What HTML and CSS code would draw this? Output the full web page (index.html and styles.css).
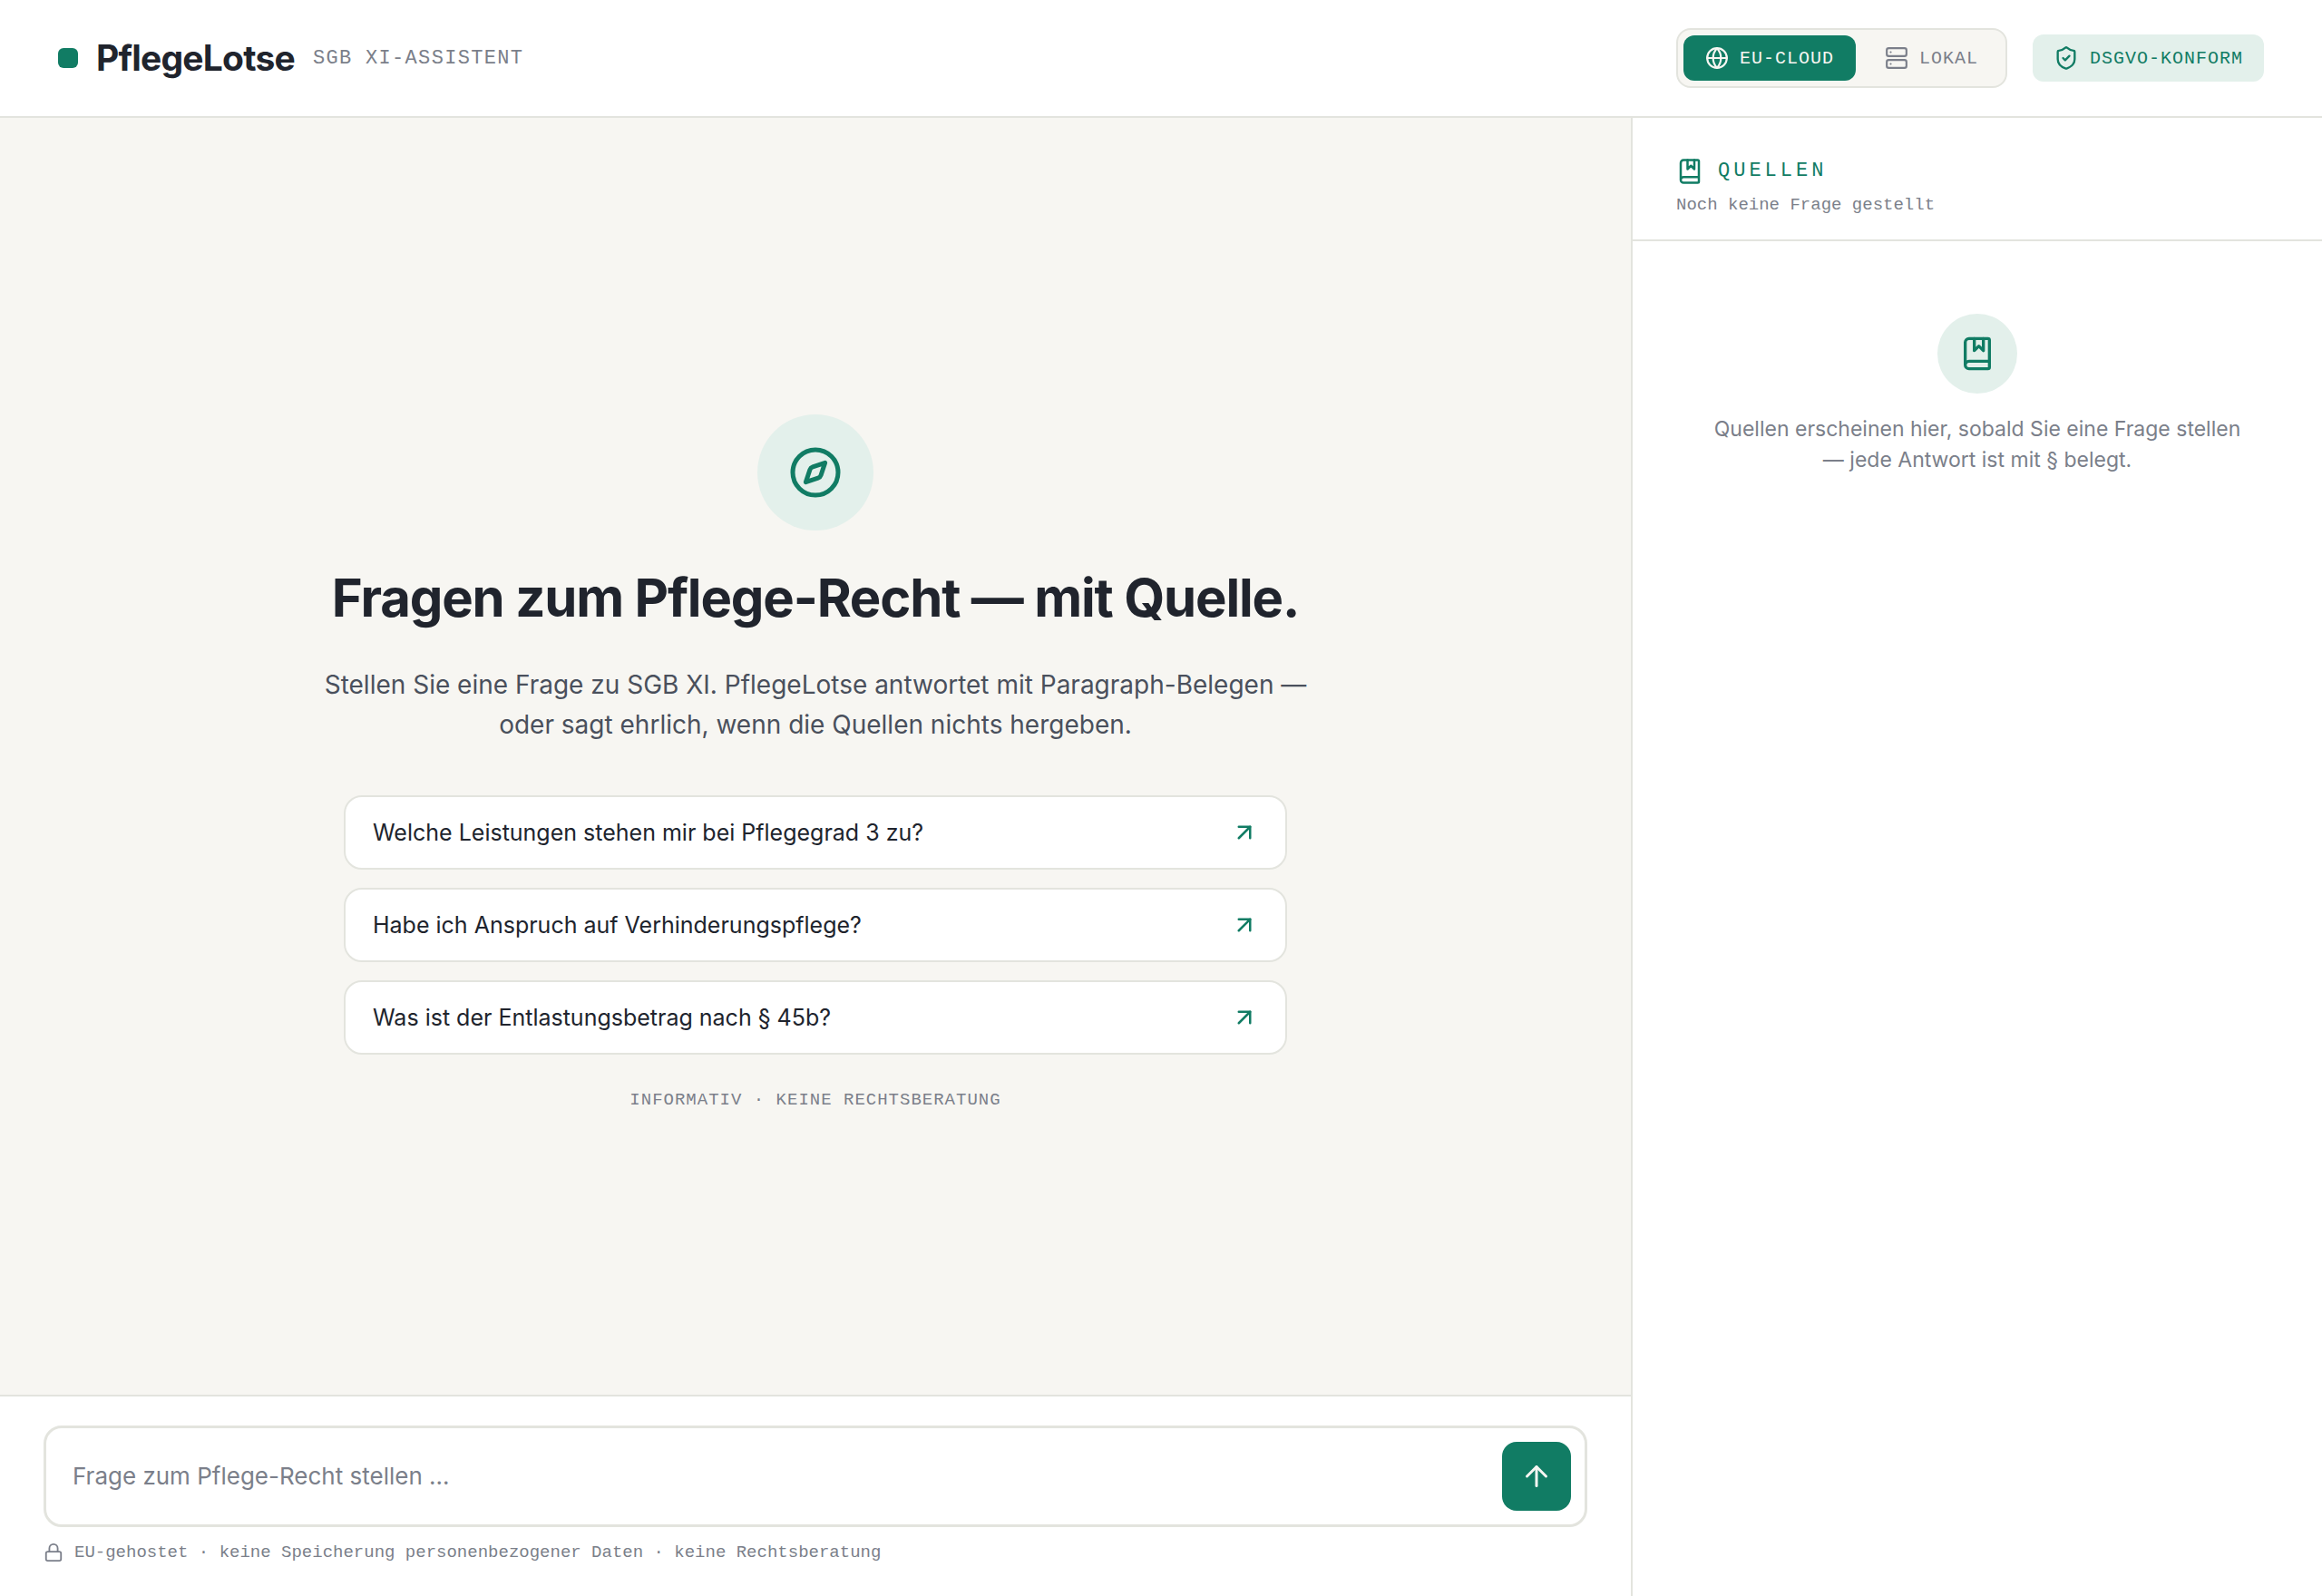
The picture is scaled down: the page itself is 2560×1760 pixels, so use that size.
FILE: index.html
```html
<!DOCTYPE html>
<html lang="de">
<head>
  <meta charset="utf-8">
  <meta name="viewport" content="width=device-width, initial-scale=1">
  <title>PflegeLotse</title>
  <link rel="stylesheet" href="styles.css">
</head>
<body>
  <svg class="sprite" aria-hidden="true">
    <symbol id="icon-book" viewBox="0 0 24 24">
      <path d="M10 2v8l3-3 3 3V2"/>
      <path d="M4 19.500v-15A2.500 2.500 0 0 1 6.500 2H19a1 1 0 0 1 1 1v18a1 1 0 0 1-1 1H6.500a1 1 0 0 1 0-5H20"/>
    </symbol>
    <symbol id="icon-arrow-up-right" viewBox="0 0 24 24">
      <path d="M7 7h10v10"/>
      <path d="M7 17 17 7"/>
    </symbol>
  </svg>

  <header class="topbar">
    <div class="brand">
      <span class="brand-mark"></span>
      <span class="brand-name">PflegeLotse</span>
      <span class="brand-tag">SGB XI-ASSISTENT</span>
    </div>
    <div class="topbar-status">
      <div class="mode-switch" role="group" aria-label="Betriebsmodus">
        <button class="mode mode-active" type="button" aria-pressed="true">
          <svg class="icon icon-s" viewBox="0 0 24 24" aria-hidden="true">
            <circle cx="12" cy="12" r="10"/>
            <path d="M12 2a14.500 14.500 0 0 0 0 20 14.500 14.500 0 0 0 0-20"/>
            <path d="M2 12h20"/>
          </svg>
          EU-CLOUD
        </button>
        <button class="mode" type="button" aria-pressed="false">
          <svg class="icon icon-s" viewBox="0 0 24 24" aria-hidden="true">
            <rect x="2" y="2" width="20" height="8" rx="2"/>
            <rect x="2" y="14" width="20" height="8" rx="2"/>
            <path d="M6 6h.01M6 18h.01"/>
          </svg>
          LOKAL
        </button>
      </div>
      <div class="badge">
        <svg class="icon icon-m" viewBox="0 0 24 24" aria-hidden="true">
          <path d="M20 13c0 5-3.500 7.500-7.660 8.950a1 1 0 0 1-.67-.01C7.500 20.500 4 18 4 13V6a1 1 0 0 1 1-1c2 0 4.500-1.200 6.240-2.720a1.170 1.170 0 0 1 1.520 0C14.510 3.810 17 5 19 5a1 1 0 0 1 1 1z"/>
          <path d="m9 12 2 2 4-4"/>
        </svg>
        DSGVO-KONFORM
      </div>
    </div>
  </header>

  <div class="workspace">
    <main class="chat">
      <section class="welcome">
        <div class="welcome-icon">
          <svg class="icon icon-xxl" viewBox="0 0 24 24" aria-hidden="true">
            <circle cx="12" cy="12" r="10"/>
            <path d="m16.240 7.760-1.804 5.411a2 2 0 0 1-1.265 1.265L7.760 16.240l1.804-5.411a2 2 0 0 1 1.265-1.265z"/>
          </svg>
        </div>
        <h1 class="welcome-title">Fragen zum Pflege-Recht — mit Quelle.</h1>
        <p class="welcome-text">Stellen Sie eine Frage zu SGB XI. PflegeLotse antwortet mit Paragraph-Belegen — oder sagt ehrlich, wenn die Quellen nichts hergeben.</p>
        <div class="suggestions">
          <button class="suggestion" type="button">
            <span>Welche Leistungen stehen mir bei Pflegegrad 3 zu?</span>
            <svg class="icon icon-l" aria-hidden="true"><use href="#icon-arrow-up-right"/></svg>
          </button>
          <button class="suggestion" type="button">
            <span>Habe ich Anspruch auf Verhinderungspflege?</span>
            <svg class="icon icon-l" aria-hidden="true"><use href="#icon-arrow-up-right"/></svg>
          </button>
          <button class="suggestion" type="button">
            <span>Was ist der Entlastungsbetrag nach § 45b?</span>
            <svg class="icon icon-l" aria-hidden="true"><use href="#icon-arrow-up-right"/></svg>
          </button>
        </div>
        <p class="disclaimer">INFORMATIV · KEINE RECHTSBERATUNG</p>
      </section>

      <form class="composer">
        <div class="composer-box">
          <input class="composer-input" type="text" placeholder="Frage zum Pflege-Recht stellen …" aria-label="Frage zum Pflege-Recht">
          <button class="send" type="button" aria-label="Frage senden">
            <svg class="icon icon-send" viewBox="0 0 24 24" aria-hidden="true">
              <path d="m5 12 7-7 7 7"/>
              <path d="M12 19V5"/>
            </svg>
          </button>
        </div>
        <p class="privacy">
          <svg class="icon icon-xs" viewBox="0 0 24 24" aria-hidden="true">
            <rect x="3" y="11" width="18" height="11" rx="2"/>
            <path d="M7 11V7a5 5 0 0 1 10 0v4"/>
          </svg>
          EU-gehostet · keine Speicherung personenbezogener Daten · keine Rechtsberatung
        </p>
      </form>
    </main>

    <aside class="sources">
      <header class="sources-head">
        <h2 class="sources-title">
          <svg class="icon icon-l" aria-hidden="true"><use href="#icon-book"/></svg>
          QUELLEN
        </h2>
        <p class="sources-status">Noch keine Frage gestellt</p>
      </header>
      <div class="sources-empty">
        <div class="sources-icon">
          <svg class="icon icon-xl" aria-hidden="true"><use href="#icon-book"/></svg>
        </div>
        <p class="sources-hint">Quellen erscheinen hier, sobald Sie eine Frage stellen — jede Antwort ist mit § belegt.</p>
      </div>
    </aside>
  </div>
</body>
</html>
```

FILE: styles.css
```css
:root {
  --green: #117c64;
  --green-soft: #e3f0eb;
  --paper: #f7f6f2;
  --surface: #ffffff;
  --line: #e3e4de;
  --ink: #20242d;
  --ink-soft: #4a505c;
  --muted: #7b7f8a;
  --sans: Inter, "Liberation Sans", sans-serif;
  --mono: "Liberation Mono", monospace;
}

* {
  box-sizing: border-box;
}

body {
  display: flex;
  flex-direction: column;
  min-height: 100vh;
  margin: 0;
  background: var(--surface);
  color: var(--ink);
  font-family: var(--sans);
}

h1,
h2,
p {
  margin: 0;
}

button {
  border: 0;
  background: none;
  cursor: pointer;
}

.sprite {
  display: none;
}

/* Icons */

.icon {
  flex: none;
  fill: none;
  stroke: currentColor;
  stroke-width: 2;
  stroke-linecap: round;
  stroke-linejoin: round;
}

.icon-xs {
  width: 22px;
  height: 22px;
}

.icon-s {
  width: 26px;
  height: 26px;
}

.icon-m {
  width: 28px;
  height: 28px;
}

.icon-l {
  width: 30px;
  height: 30px;
}

.icon-send {
  width: 36px;
  height: 36px;
}

.icon-xl {
  width: 40px;
  height: 40px;
}

.icon-xxl {
  width: 60px;
  height: 60px;
}

/* Top bar */

.topbar {
  display: flex;
  align-items: center;
  justify-content: space-between;
  padding: 31px 64px;
  border-bottom: 2px solid var(--line);
}

.brand {
  display: flex;
  align-items: center;
}

.brand-mark {
  width: 22px;
  height: 22px;
  border-radius: 6px;
  background: var(--green);
}

.brand-name {
  margin-left: 20px;
  font-size: 39px;
  font-weight: 700;
  line-height: 46px;
  letter-spacing: -0.02em;
}

.brand-tag {
  margin-left: 20px;
  color: var(--muted);
  font-family: var(--mono);
  font-size: 22px;
  letter-spacing: 0.06em;
}

.topbar-status {
  display: flex;
  align-items: center;
  gap: 28px;
  font-family: var(--mono);
  font-size: 20px;
  letter-spacing: 1px;
}

.mode-switch {
  display: flex;
  gap: 8px;
  padding: 6px;
  border: 2px solid var(--line);
  border-radius: 16px;
  background: var(--paper);
}

.mode {
  display: flex;
  align-items: center;
  gap: 12px;
  height: 50px;
  padding: 0 24px;
  border-radius: 12px;
  color: var(--muted);
  font: inherit;
  letter-spacing: inherit;
}

.mode-active {
  background: var(--green);
  color: var(--paper);
}

.badge {
  display: flex;
  align-items: center;
  gap: 12px;
  height: 52px;
  padding: 0 23px;
  border-radius: 12px;
  background: var(--green-soft);
  color: var(--green);
}

/* Workspace */

.workspace {
  display: grid;
  flex: 1;
  grid-template-columns: minmax(0, 1fr) 762px;
}

.chat {
  display: flex;
  flex-direction: column;
}

.welcome {
  display: flex;
  flex: 1;
  flex-direction: column;
  align-items: center;
  justify-content: center;
  padding: 64px 48px 48px;
  background: var(--paper);
  text-align: center;
}

.welcome-icon {
  display: grid;
  place-items: center;
  width: 128px;
  height: 128px;
  border-radius: 50%;
  background: var(--green-soft);
  color: var(--green);
}

.welcome-title {
  margin-top: 40px;
  font-size: 58px;
  font-weight: 700;
  line-height: 68px;
  letter-spacing: -0.02em;
}

.welcome-text {
  max-width: 1120px;
  margin-top: 40px;
  color: var(--ink-soft);
  font-size: 28px;
  line-height: 44px;
}

.suggestions {
  display: flex;
  flex-direction: column;
  gap: 20px;
  width: 100%;
  max-width: 1040px;
  margin-top: 56px;
}

.suggestion {
  display: flex;
  align-items: center;
  justify-content: space-between;
  gap: 24px;
  padding: 22px 30px;
  border: 2px solid var(--line);
  border-radius: 20px;
  background: var(--surface);
  color: var(--ink);
  font-family: var(--sans);
  font-size: 25px;
  line-height: 34px;
  text-align: left;
}

.suggestion .icon {
  color: var(--green);
}

.disclaimer {
  margin-top: 36px;
  color: var(--muted);
  font-family: var(--mono);
  font-size: 19px;
  line-height: 28px;
  letter-spacing: 1px;
}

/* Composer */

.composer {
  padding: 32px 48px 36px;
  border-top: 2px solid var(--line);
}

.composer-box {
  display: flex;
  align-items: center;
  gap: 16px;
  padding: 15px 15px 15px 29px;
  border: 3px solid var(--line);
  border-radius: 20px;
  background: var(--surface);
}

.composer-input {
  flex: 1;
  min-width: 0;
  padding: 0;
  border: 0;
  outline: 0;
  background: none;
  color: var(--ink);
  font-family: var(--sans);
  font-size: 26px;
  line-height: 34px;
}

.composer-input::placeholder {
  color: var(--muted);
  opacity: 1;
}

.send {
  display: grid;
  place-items: center;
  width: 76px;
  height: 76px;
  padding: 0;
  border-radius: 16px;
  background: var(--green);
  color: var(--paper);
}

.privacy {
  display: flex;
  align-items: center;
  gap: 12px;
  margin-top: 16px;
  color: var(--muted);
  font-family: var(--mono);
  font-size: 19px;
  line-height: 24px;
}

/* Sources */

.sources {
  border-left: 2px solid var(--line);
}

.sources-head {
  padding: 44px 48px 24px;
  border-bottom: 2px solid var(--line);
}

.sources-title {
  display: flex;
  align-items: center;
  gap: 16px;
  color: var(--green);
  font-family: var(--mono);
  font-size: 22px;
  font-weight: 400;
  line-height: 30px;
  letter-spacing: 4px;
}

.sources-status {
  margin-top: 8px;
  color: var(--muted);
  font-family: var(--mono);
  font-size: 19px;
  line-height: 28px;
}

.sources-empty {
  display: flex;
  flex-direction: column;
  align-items: center;
  padding: 80px 80px 48px;
  text-align: center;
}

.sources-icon {
  display: grid;
  place-items: center;
  width: 88px;
  height: 88px;
  border-radius: 50%;
  background: var(--green-soft);
  color: var(--green);
}

.sources-hint {
  margin-top: 22px;
  color: var(--muted);
  font-size: 23px;
  line-height: 34px;
}
```
